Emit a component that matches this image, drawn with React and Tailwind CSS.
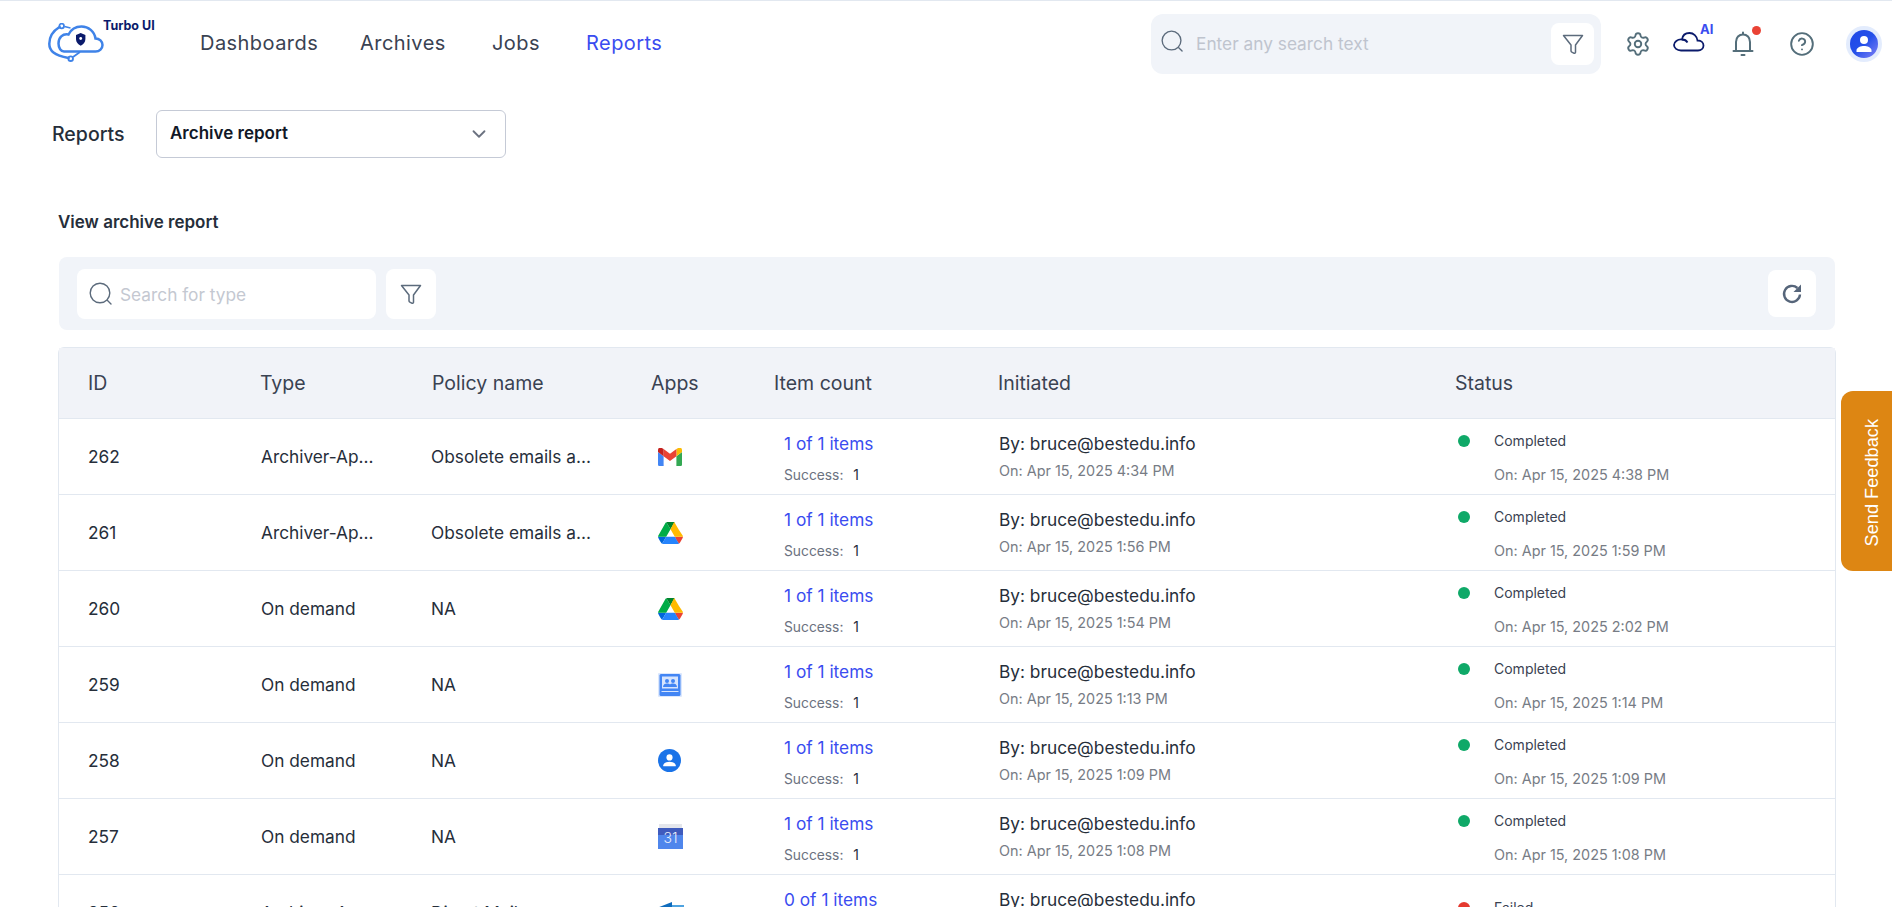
import React from "react";
import { ChevronDown, Settings, CircleHelp } from "lucide-react";

const rows = [
  { id: "262", type: "Archiver-Ap...", policy: "Obsolete emails a...", app: "gmail", on: "Apr 15, 2025 4:34 PM", done: "Apr 15, 2025 4:38 PM" },
  { id: "261", type: "Archiver-Ap...", policy: "Obsolete emails a...", app: "drive", on: "Apr 15, 2025 1:56 PM", done: "Apr 15, 2025 1:59 PM" },
  { id: "260", type: "On demand", policy: "NA", app: "drive", on: "Apr 15, 2025 1:54 PM", done: "Apr 15, 2025 2:02 PM" },
  { id: "259", type: "On demand", policy: "NA", app: "directory", on: "Apr 15, 2025 1:13 PM", done: "Apr 15, 2025 1:14 PM" },
  { id: "258", type: "On demand", policy: "NA", app: "contacts", on: "Apr 15, 2025 1:09 PM", done: "Apr 15, 2025 1:09 PM" },
  { id: "257", type: "On demand", policy: "NA", app: "calendar", on: "Apr 15, 2025 1:08 PM", done: "Apr 15, 2025 1:08 PM" },
  { id: "256", type: "Archiver-Ap...", policy: "Direct Mail...", app: "onedrive", on: "Apr 15, 2025 1:02 PM", done: "Apr 15, 2025 1:02 PM", count: "0 of 1 items", failed: true },
];

function FilterIcon({ className }) {
  return (
    <svg viewBox="0 0 24 24" fill="none" stroke="currentColor" strokeWidth="1.5" strokeLinejoin="round" className={className}>
      <path d="M2.500 3.500h19L14.500 13v7.200c0 .8-1 1.300-1.800.9l-1.800-1c-.5-.3-.9-.8-.9-1.400V13z" />
    </svg>
  );
}

function SearchIcon({ className }) {
  return (
    <svg viewBox="0 0 24 24" fill="none" stroke="currentColor" strokeWidth="1.400" strokeLinecap="round" className={className}>
      <circle cx="11" cy="11" r="9.800" />
      <path d="M18.500 18.500l3.500 3.500" />
    </svg>
  );
}

function AppIcon({ app }) {
  if (app === "gmail") {
    return (
      <svg viewBox="0 0 24 18" className="w-[24px] h-[18px]">
        <path d="M1.600 18H5.600V8.200L0 4v12.400C0 17.300.7 18 1.600 18z" fill="#4285f4" />
        <path d="M18.400 18h4c.9 0 1.600-.7 1.600-1.600V4l-5.600 4.200z" fill="#34a853" />
        <path d="M18.400 1v7.200L24 4V1.900c0-2-2.300-3.100-3.800-1.900z" fill="#fbbc04" />
        <path d="M5.600 8.200V1L12 5.800 18.400 1v7.200L12 13z" fill="#ea4335" />
        <path d="M0 1.900V4l5.600 4.200V1L3.800 0C2.300-1.200 0-.1 0 1.900z" fill="#c5221f" />
      </svg>
    );
  }
  if (app === "drive") {
    return (
      <svg viewBox="0 0 26 23" className="w-[25px] h-[22px]">
        <path d="M2 19.800l1.200 2c.2.4.6.7 1 .9l4.300-7.400H0c0 .4.1.9.3 1.300z" fill="#0066da" />
        <path d="M13 7.600L8.700 0.200c-.4.2-.8.5-1 .9L.3 14c-.2.4-.3.9-.3 1.300h8.500z" fill="#00ac47" />
        <path d="M21.800 22.700c.4-.2.8-.5 1-.9l.5-.9 2.400-4.200c.2-.4.3-.9.3-1.300h-8.500l1.800 3.600z" fill="#ea4335" />
        <path d="M13 7.600l4.300-7.400c-.4-.2-.9-.2-1.300-.2H10c-.5 0-.9.1-1.300.2z" fill="#00832d" />
        <path d="M17.500 15.300h-9l-4.300 7.400c.4.2.9.3 1.300.3h15c.5 0 .9-.1 1.300-.3z" fill="#2684fc" />
        <path d="M21.700 8.100l-4-6.900c-.2-.4-.6-.7-1-.9L13 7.600l4.500 7.700H26c0-.4-.1-.9-.3-1.300z" fill="#ffba00" />
      </svg>
    );
  }
  if (app === "directory") {
    return (
      <svg viewBox="0 0 24 24" className="w-[24px] h-[24px]">
        <rect x="0" y="0" width="24" height="24" rx="1" fill="#dbe7fd" />
        <rect x="1.500" y="1" width="21" height="22" rx="1.500" fill="#4285f4" />
        <rect x="4" y="3.500" width="16" height="12" fill="#d6e4fd" />
        <circle cx="9" cy="8" r="2" fill="#4285f4" />
        <circle cx="15" cy="8" r="2" fill="#4285f4" />
        <path d="M5 14c0-2.500 2-3.500 4-3.500 1.200 0 2.300.3 3 1 .7-.7 1.800-1 3-1 2 0 4 1 4 3.500z" fill="#4285f4" />
        <rect x="3.500" y="18" width="17" height="1" fill="#d6e4fd" />
      </svg>
    );
  }
  if (app === "contacts") {
    return (
      <svg viewBox="0 0 24 24" className="w-[23px] h-[23px]">
        <circle cx="12" cy="12" r="12" fill="#1a73e8" />
        <circle cx="12" cy="8.800" r="3.200" fill="#fff" />
        <path d="M5.500 17c0-2.600 4.200-3.800 6.500-3.800s6.500 1.200 6.500 3.800v1h-13z" fill="#fff" />
      </svg>
    );
  }
  if (app === "calendar") {
    return (
      <div className="relative w-[25px] flex flex-col">
        <div className="h-[4px] mx-[1px] bg-[#e4e6ec]" />
        <div className="h-[7px] bg-[#3f5bbd]" />
        <div className="h-[14px] bg-[#4f86ec]" />
        <span className="absolute inset-x-0 top-[6px] text-center text-[14px] leading-[16px] font-light text-[#e8effc]">31</span>
      </div>
    );
  }
  return (
    <svg viewBox="0 0 26 22" className="w-[26px] h-[22px]">
      <path d="M0 5.500L14 0v22L0 18z" fill="#0f6cbd" />
      <rect x="14" y="3" width="12" height="16" fill="#4ea3e0" />
    </svg>
  );
}

function Row({ row }) {
  return (
    <div className="flex h-[76px] border-t border-[#e2e8f0] text-[17.3px] text-[#262e3a]">
      <div className="w-[202px] pl-[29px] flex items-center">{row.id}</div>
      <div className="w-[170px] flex items-center">{row.type}</div>
      <div className="w-[221px] flex items-center">{row.policy}</div>
      <div className="w-[123px] pl-[6px] flex items-center">
        <AppIcon app={row.app} />
      </div>
      <div className="w-[224px] pl-[9px] pt-[13px]">
        <div className="text-[#3a4cf0] leading-[24px]">{row.count || "1 of 1 items"}</div>
        <div className="text-[13.800px] leading-[20px] mt-[9px] text-[#6b7280]">
          Success: <span className="ml-[6px] text-[#262e3a]">{row.count ? "0" : "1"}</span>
        </div>
      </div>
      <div className="w-[457px] pt-[13px]">
        <div className="leading-[24px]">By: bruce@bestedu.info</div>
        <div className="text-[14.400px] leading-[20px] mt-[5px] text-[#777c85]">On: {row.on}</div>
      </div>
      <div className={"flex-1 pl-[2px] flex " + (row.failed ? "pt-[22px]" : "pt-[11px]")}>
        <span className={"w-[12px] h-[12px] mt-[5px] rounded-full " + (row.failed ? "bg-[#e5392f]" : "bg-[#0fa968]")} />
        <div className="ml-[24px] text-[14px]">
          <div className="leading-[22px] text-[#3a4252]">{row.failed ? "Failed" : "Completed"}</div>
          <div className="text-[14.400px] leading-[20px] mt-[13px] text-[#777c85]">On: {row.done}</div>
        </div>
      </div>
    </div>
  );
}

export default function App() {
  return (
    <div className="relative h-[907px] overflow-hidden bg-white border-t border-[#e2e8f0] font-['Inter',sans-serif]">
      <header className="flex items-center h-[86px] pl-[48px] pr-[10px]">
        <div className="flex w-[152px] h-[56px] items-start pt-[7px]">
          <svg viewBox="0 0 56 42" fill="none" className="w-[56px] h-[42px] text-[#3f83e8]">
            <path d="M11.500 4C5 8 1.300 13.500 1.300 20.700S6 32 20.500 35" stroke="currentColor" strokeWidth="2.500" strokeLinecap="round" />
            <path d="M16.500 3.500l6 1.500M25 34l7-5" stroke="currentColor" strokeWidth="1.800" />
            <circle cx="13.700" cy="3" r="2.300" stroke="currentColor" strokeWidth="1.800" />
            <circle cx="22.700" cy="35.700" r="2.300" stroke="currentColor" strokeWidth="1.800" />
            <path d="M16 28.500h31.500c4 0 7-3 7-6.500s-3-6.500-7-6.500c-1-7-7-12-14-12-6 0-10.500 3-13 8-6-1-10 3-10 9 0 4.500 2.500 8 5.500 8z" stroke="currentColor" strokeWidth="2.500" />
            <path d="M32.700 10l4.700 2v4c0 3-1.900 5.500-4.700 6.800-2.800-1.300-4.700-3.800-4.700-6.800v-4z" fill="#0a1a6b" />
            <circle cx="32.700" cy="15.500" r="1.400" fill="#fff" />
          </svg>
          <span className="text-[12.500px] font-bold leading-[14px] text-[#0a1a6b] whitespace-nowrap -ml-[1px] -mt-[4px]">Turbo UI</span>
        </div>
        <nav className="flex text-[20px] text-[#3a4252] tracking-[0.45px] -mt-[2px]">
          <span className="w-[160px]">Dashboards</span>
          <span className="w-[132px]">Archives</span>
          <span className="w-[94px]">Jobs</span>
          <span className="text-[#3a4cf0]">Reports</span>
        </nav>
        <div className="ml-auto flex items-center">
          <div className="flex items-center w-[450px] h-[60px] rounded-[12px] bg-[#f1f4f9] pl-[10px] pr-[7px]">
            <SearchIcon className="w-[23px] h-[23px] text-[#5c6b7c] -mt-[6px]" />
            <span className="ml-[12px] text-[17.300px] text-[#bfc4ce]">Enter any search text</span>
            <div className="ml-auto flex items-center justify-center w-[43px] h-[42px] rounded-[8px] bg-white">
              <FilterIcon className="w-[24px] h-[24px] text-[#5c6b7c]" />
            </div>
          </div>
          <Settings className="ml-[24px] w-[26px] h-[26px] text-[#546e7a]" strokeWidth={1.75} />
          <div className="relative ml-[22px] w-[32px] h-[24px]">
            <svg viewBox="0 0 32 24" fill="none" stroke="#0a1a6b" strokeWidth="1.800" className="w-[32px] h-[24px]">
              <path d="M8 18.500h17c3 0 5.500-2 5.500-5s-2.500-5-5.500-5h-.5C24 4 20.500 1 16.500 1 12.500 1 9.500 3.500 9 7.500 4.500 7 1 10 1 13s3 5.500 7 5.500z" />
              <path d="M9 7.500c2.500 0 4.500 1 5.500 3" />
            </svg>
            <span className="absolute -top-[11px] left-[27px] text-[13px] leading-[16px] font-bold text-[#3a4cf0]">AI</span>
          </div>
          <div className="relative ml-[26px] w-[24px] h-[28px]">
            <svg viewBox="0 0 24 28" fill="none" stroke="#546e7a" strokeWidth="2" strokeLinecap="round" className="w-[24px] h-[28px]">
              <path d="M12 2.500v2M5 20.500V12c0-4.500 3-7.500 7-7.500s7 3 7 7.500v8.500M2.500 21h19M10.500 25h3" />
            </svg>
            <span className="absolute -top-[4px] left-[21px] w-[9px] h-[9px] rounded-full bg-[#ea4335]" />
          </div>
          <CircleHelp className="ml-[34px] w-[26px] h-[26px] text-[#546e7a]" strokeWidth={1.75} />
          <div className="ml-[31px] flex items-center justify-center w-[36px] h-[36px] rounded-full bg-[#e3ecfd]">
            <div className="flex items-center justify-center w-[28px] h-[28px] rounded-full bg-linear-to-br from-[#1f47e6] via-[#2450ea] to-[#7f7ff5]">
              <svg viewBox="0 0 28 28" fill="#fff" className="w-[28px] h-[28px]">
                <circle cx="14" cy="10" r="4" />
                <path d="M6.500 20.500c0-3.300 4.500-4.500 7.500-4.500s7.500 1.200 7.500 4.500v1.500h-15z" />
              </svg>
            </div>
          </div>
        </div>
      </header>

      <div className="flex items-center mt-[23px] pl-[52px]">
        <span className="w-[104px] pt-[2px] text-[19.500px] font-medium text-[#262e3a]">Reports</span>
        <div className="flex items-center justify-between w-[350px] h-[48px] px-[13px] rounded-[6px] border border-[#c5cad6] text-[17px] font-semibold text-[#111827]">
          Archive report
          <ChevronDown className="w-[22px] h-[22px] text-[#6b7280] mr-[2px]" />
        </div>
      </div>

      <h2 className="mt-[52px] ml-[58px] text-[17px] leading-[24px] font-semibold text-[#262e3a]">View archive report</h2>

      <div className="flex items-center h-[73px] mt-[23px] ml-[59px] mr-[57px] pl-[18px] pr-[19px] rounded-[8px] bg-[#f1f4f9]">
        <div className="flex items-center w-[299px] h-[50px] pl-[12px] rounded-[8px] bg-white">
          <SearchIcon className="w-[24px] h-[24px] text-[#5c6b7c]" />
          <span className="ml-[7px] pt-[2px] text-[17.300px] text-[#c4c8d1]">Search for type</span>
        </div>
        <div className="flex items-center justify-center ml-[10px] w-[50px] h-[50px] rounded-[8px] bg-white">
          <FilterIcon className="w-[24px] h-[24px] text-[#5c6b7c]" />
        </div>
        <div className="flex items-center justify-center ml-auto w-[48px] h-[47px] rounded-[8px] bg-white">
          <svg viewBox="0 0 24 24" fill="none" className="w-[24px] h-[24px] text-[#56657a]">
            <path d="M20 12.500a8 8 0 1 1-2.600-6.500" stroke="currentColor" strokeWidth="2.400" />
            <path d="M21 2.500V10h-7.500z" fill="currentColor" />
          </svg>
        </div>
      </div>

      <div className="mt-[17px] ml-[58px] mr-[56px] rounded-t-[6px] border-x border-t border-[#e2e8f0]">
        <div className="flex items-center h-[70px] pt-[2px] bg-[#f1f3f8] text-[19.500px] text-[#3a4252]">
          <span className="w-[201px] pl-[29px]">ID</span>
          <span className="w-[172px]">Type</span>
          <span className="w-[219px]">Policy name</span>
          <span className="w-[123px]">Apps</span>
          <span className="w-[224px]">Item count</span>
          <span className="w-[457px]">Initiated</span>
          <span>Status</span>
        </div>
        {rows.map((row) => (
          <Row key={row.id} row={row} />
        ))}
      </div>

      <div className="absolute right-0 top-[390px] flex items-center justify-center w-[51px] h-[180px] pl-[12px] pt-[3px] rounded-l-[12px] bg-[#dd8613]">
        <span className="[writing-mode:vertical-rl] rotate-180 text-[18.200px] text-white font-['Liberation_Sans',sans-serif]">Send Feedback</span>
      </div>
    </div>
  );
}
